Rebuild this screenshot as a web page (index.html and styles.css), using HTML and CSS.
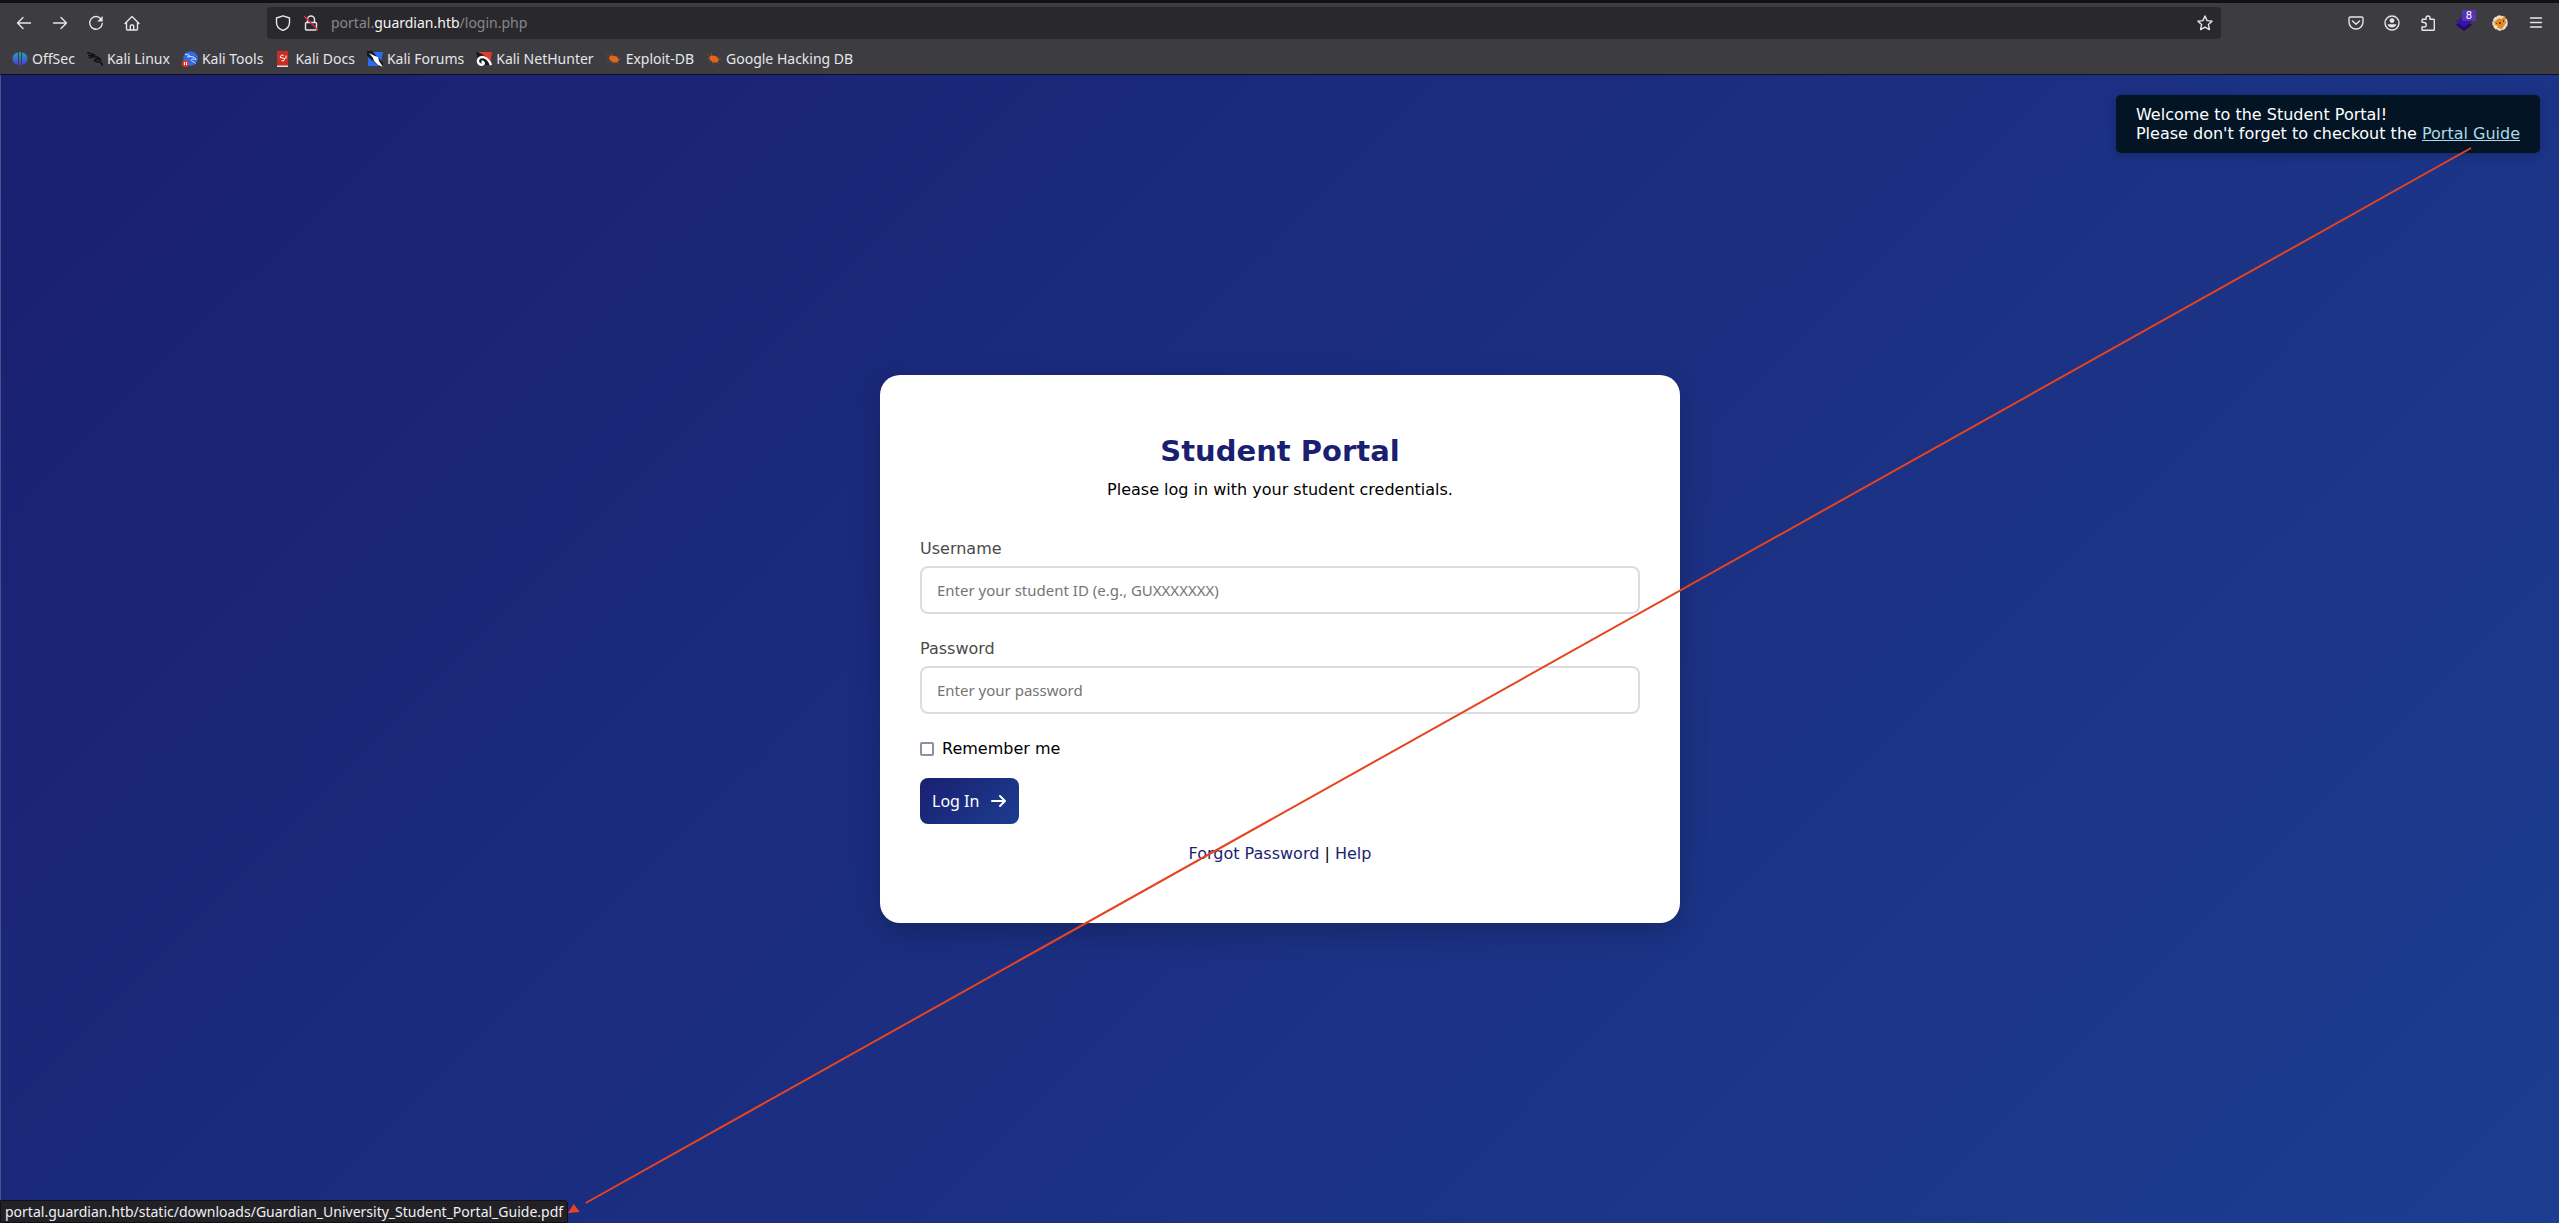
FILE: index.html
```html
<!DOCTYPE html>
<html lang="en">
<head>
<meta charset="utf-8">
<title>Student Portal</title>
<link rel="stylesheet" href="styles.css">
</head>
<body>
<header class="chrome">
  <div class="tabstrip"></div>
  <div class="toolbar">
    <nav class="nav-buttons" aria-label="Navigation">
      <button class="tool" aria-label="Back"><svg viewBox="0 0 16 16"><path d="M14.500 8H1.500M7 2.500 1.500 8 7 13.500"/></svg></button>
      <button class="tool" aria-label="Forward"><svg viewBox="0 0 16 16"><path d="M1.500 8h13M9 2.500 14.500 8 9 13.500"/></svg></button>
      <button class="tool" aria-label="Reload"><svg viewBox="0 0 16 16"><path d="M13 4A6.300 6.300 0 1 0 14.300 8.500"/><path class="solid" d="M14.700 1v5.500H9.200z"/></svg></button>
      <button class="tool" aria-label="Home"><svg viewBox="0 0 16 16"><path d="M1 8.500 8 1.500l7 7M2.500 7.500V14q0 1 1 1h9q1 0 1-1V7.500M6.300 15v-4q0-1 1-1h1.400q1 0 1 1v4"/></svg></button>
    </nav>
    <div class="urlbar">
      <svg class="icon" viewBox="0 0 16 16"><path d="M8 .8 14.500 3v4.500c0 4-3 6.700-6.500 8-3.500-1.300-6.500-4-6.500-8V3z"/></svg>
      <svg class="icon lock" viewBox="0 0 16 16"><path d="M4.500 7V4.500a3.500 3.500 0 0 1 7 0V7M3.500 7.500h9q1 0 1 1V14q0 1-1 1h-9q-1 0-1-1V8.500q0-1 1-1z"/><path class="strike" d="M1.500 1.500l13 13"/></svg>
      <span class="url">portal.<b>guardian.htb</b>/login.php</span>
      <svg class="icon" viewBox="0 0 16 16"><path d="M8 1l2.100 4.600 5 .6-3.700 3.400 1 5L8 12.100l-4.400 2.500 1-5L.900 6.200l5-.6z"/></svg>
    </div>
    <div class="extensions">
      <button class="tool" aria-label="Pocket"><svg viewBox="0 0 16 16"><path d="M2.500 2h11q1.500 0 1.500 1.500V7A7 7 0 0 1 1 7V3.500Q1 2 2.500 2zM4.500 6 8 9.300 11.500 6"/></svg></button>
      <button class="tool" aria-label="Account"><svg viewBox="0 0 16 16"><circle cx="8" cy="8" r="7"/><circle class="solid" cx="8" cy="5.600" r="2.400"/><path class="solid" d="M3.600 9.300h8.800a4.500 4 0 0 1-8.800 0z"/></svg></button>
      <button class="tool" aria-label="Extensions"><svg viewBox="0 0 16 16"><path d="M2 7V5q0-.8.800-.8H6V3a2 2 0 0 1 4 0v1.200h3.500q.8 0 .8.800v9.500q0 .8-.8.800H2.800q-.8 0-.8-.8V12h2a1.500 1.500 0 0 0 0-4.500z"/></svg></button>
      <button class="tool" aria-label="Technology profiler"><svg viewBox="0 0 16 16"><path fill="#1d0b66" stroke="none" d="M0 10 8 4l8 6-8 6z"/><path fill="#3a12a6" stroke="none" d="M0 6.500 8 1l8 5.500-8 6z"/></svg><span class="count">8</span></button>
      <button class="tool" aria-label="Proxy switcher"><svg viewBox="0 0 16 16"><circle cx="8" cy="8" r="7" fill="#f1dfca" stroke="#e8e0d8" stroke-dasharray="3 2"/><path fill="#e58a20" stroke="none" d="M2 7l5-4 2 1 4-3 1 7-4 6-5-1 1-2-3-1z"/><path fill="#6b3a12" stroke="none" d="M7 7h2v2H7zM11 5h1v2h-1zM4 8h1v1H4z"/></svg></button>
      <button class="tool" aria-label="Menu"><svg viewBox="0 0 16 16"><path d="M2.500 3h11M2.500 7.500h11M2.500 12h11"/></svg></button>
    </div>
  </div>
  <nav class="bookmarks" aria-label="Bookmarks">
    <a href="#"><svg viewBox="0 0 16 16"><defs><linearGradient id="offsec" gradientUnits="userSpaceOnUse" x1="0" y1="1" x2="0" y2="15"><stop stop-color="#22a3b4"/><stop offset="1" stop-color="#4d38d8"/></linearGradient></defs><path fill="url(#offsec)" d="M6 1.200V14Q.5 12.500.5 7.500T6 1.200zM7 1h2v10L8.500 15.500h-1L7 11zM10 1.200q5.500 1.300 5.500 6.300T10 14z"/></svg>OffSec</a>
    <a href="#"><svg viewBox="0 0 16 16"><path fill="none" stroke="#121214" stroke-width="1.600" d="M0 1.500l8 2.500M1 4.500 8 5M2 7l6-1.500c3 .5 5 2 5.500 3.500-3-1.500-6-1-6 .5s4 1 6 2 2 2 2 3.500"/></svg>Kali Linux</a>
    <a href="#"><svg viewBox="0 0 16 16"><circle cx="8.500" cy="7.500" r="7.300" fill="#2f6be8"/><path fill="none" stroke="#dbe6ff" d="M3 3l5 1.500M5 6l4-.5c3 0 4.500 2 5 3-3-1-5-.5-4.500 1s3 1 4 3"/><circle cx="3.500" cy="12.500" r="3.500" fill="#e2392d"/><path stroke="#fff" d="M2.500 11v3M4.500 11v3"/></svg>Kali Tools</a>
    <a href="#"><svg viewBox="0 0 16 16"><path fill="#2f3c60" d="M1 0h2v15H1z"/><path fill="#cb2b20" d="M2 0h11v14.500H2z"/><path fill="#e8e0dd" d="M2 14.500h11V16H2z"/><path fill="none" stroke="#fff" d="M8.500 4.500l-2-.5L5 6.500l5 1L8.500 10l-2-.5M11 4.500v3"/></svg>Kali Docs</a>
    <a href="#"><svg viewBox="0 0 16 16"><path fill="#2a6cf2" d="M1 1h15l-3 14H1z"/><path fill="#17181c" d="M0 0h5l11 12v4h-3L0 5z"/><path fill="#fff" d="M2 2l6 3 3 1 1 4 4 6-5-2-4-4-1-3z"/></svg>Kali Forums</a>
    <a href="#"><svg viewBox="0 0 16 16"><path fill="#e23a2e" d="M3 1h13l-2 12z"/><path fill="#17181c" d="M0 1l6 2 4 3 5 8H9L2 10z"/><path fill="none" stroke="#fff" stroke-width="2.400" d="M15 14C12 6 5 4 2.500 8c-2 4 2 7 5 5q1-2-2-2.500"/></svg>Kali NetHunter</a>
    <a href="#"><svg viewBox="0 0 16 16"><path fill="none" stroke="#8a4526" d="M1 3l12 10M5 2l2 12M1 8h14M3 11l9-6"/><ellipse cx="8" cy="8" rx="5" ry="3.200" transform="rotate(25 8 8)" fill="#e0651f"/></svg>Exploit-DB</a>
    <a href="#"><svg viewBox="0 0 16 16"><path fill="none" stroke="#8a4526" d="M1 3l12 10M5 2l2 12M1 8h14M3 11l9-6"/><ellipse cx="8" cy="8" rx="5" ry="3.200" transform="rotate(25 8 8)" fill="#e0651f"/></svg>Google Hacking DB</a>
  </nav>
</header>
<main class="page">
  <aside class="toast">Welcome to the Student Portal!<br>Please don't forget to checkout the <a href="#">Portal Guide</a></aside>
  <section class="card">
    <h1>Student Portal</h1>
    <p class="lead">Please log in with your student credentials.</p>
    <form>
      <label class="name" for="user">Username</label>
      <input class="field" id="user" type="text" placeholder="Enter your student ID (e.g., GUXXXXXXX)">
      <label class="name" for="pass">Password</label>
      <input class="field" id="pass" type="password" placeholder="Enter your password">
      <label class="remember"><input type="checkbox">Remember me</label>
      <button class="login" type="button">Log In<svg viewBox="0 0 16 16"><path d="M1 8h13M9 3l5 5-5 5"/></svg></button>
    </form>
    <p class="links"><a href="#">Forgot Password</a> | <a href="#">Help</a></p>
  </section>
  <output class="status">portal.guardian.htb/static/downloads/Guardian_University_Student_Portal_Guide.pdf</output>
  <svg class="arrow" viewBox="0 75 2559 1148" preserveAspectRatio="none" aria-hidden="true"><path fill="none" stroke="#e8431f" stroke-width="2" d="M2471 148 585 1203"/><path fill="#e8431f" d="M567 1213l6-9 6 8z"/></svg>
</main>
</body>
</html>
```
FILE: styles.css
```css
* { box-sizing: border-box; }
body {
  margin: 0;
  min-height: 100vh;
  display: flex;
  flex-direction: column;
  font: 16px/19px "DejaVu Sans", sans-serif;
  color: #000;
}
h1, p { margin: 0; }
button { font: inherit; border: 0; padding: 0; background: none; color: inherit; }

.chrome {
  background: #3c3c41;
  border-bottom: 1px solid #111114;
  color: #e6e6e8;
  font: 14px/20px "Noto Sans", sans-serif;
}
.tabstrip { height: 3px; background: #111114; }
.toolbar { display: flex; align-items: center; height: 40px; padding: 0 15px 0 16px; }
.chrome svg { width: 16px; height: 16px; flex: none; display: block; }
.tool { position: relative; }
.tool svg, .icon { fill: none; stroke: #e6e6e8; stroke-width: 1.4; stroke-linecap: round; stroke-linejoin: round; }
.tool .solid { fill: #e6e6e8; stroke: none; }
.nav-buttons { display: flex; gap: 20px; width: 251px; }
.urlbar {
  flex: 1;
  display: flex;
  align-items: center;
  gap: 12px;
  height: 32px;
  padding: 0 8px;
  border-radius: 4px;
  background: #29292d;
  color: #87878b;
}
.url { flex: 1; }
.url b { font-weight: 400; color: #f4f4f6; }
.lock .strike { stroke: #e22840; }
.extensions { display: flex; justify-content: flex-end; gap: 20px; width: 323px; }
.count {
  position: absolute;
  left: 6px;
  top: -5px;
  width: 14px;
  height: 11px;
  background: #5a33b0;
  font: 10px/11px "DejaVu Sans", sans-serif;
  color: #fff;
  text-align: center;
}
.bookmarks { display: flex; gap: 12px; height: 31px; padding: 0 12px; align-items: center; }
.bookmarks a { display: flex; align-items: center; gap: 4px; color: inherit; text-decoration: none; white-space: nowrap; }

.page {
  flex: 1;
  position: relative;
  display: flex;
  align-items: center;
  justify-content: center;
  border-left: 1px solid #4a5090;
  background: linear-gradient(135deg, #1a1f71, #1c3d90);
}
.toast {
  position: absolute;
  top: 20px;
  right: 19px;
  padding: 10px 20px;
  border-radius: 5px;
  background: #031525;
  color: #fff;
  box-shadow: 0 2px 10px rgba(0, 0, 0, .2);
}
.toast a { color: #add8e6; }
.card {
  width: 800px;
  padding: 60px 40px;
  border-radius: 20px;
  background: #fff;
  box-shadow: 0 10px 30px rgba(0, 0, 0, .2);
}
.card h1 { font-size: 29px; line-height: 32px; text-align: center; color: #1a1f71; }
.lead { margin: 13px 0 40px; text-align: center; }
form { display: flex; flex-direction: column; align-items: flex-start; }
.name { margin-bottom: 8px; color: #4a4a4a; }
.field {
  width: 100%;
  height: 48px;
  margin-bottom: 25px;
  padding: 0 15px;
  border: 2px solid #ddd;
  border-radius: 8px;
  font: 15px "Noto Sans", sans-serif;
}
.field::placeholder { color: #757575; }
.remember { display: flex; align-items: center; gap: 8px; margin-bottom: 20px; }
.remember input {
  appearance: none;
  width: 14px;
  height: 14px;
  margin: 0;
  border: 2px solid #8f8f9d;
  border-radius: 2px;
}
.login {
  display: flex;
  align-items: center;
  gap: 12px;
  height: 46px;
  padding: 0 12px;
  border-radius: 8px;
  background: linear-gradient(135deg, #1a1f71, #1c3d90);
  color: #fff;
  font: 16px "Noto Sans", sans-serif;
}
.login svg { width: 16px; height: 16px; fill: none; stroke: #fff; stroke-width: 2; stroke-linecap: round; stroke-linejoin: round; }
.links { margin-top: 20px; text-align: center; }
.links a { color: #1a1f71; text-decoration: none; }
.status {
  position: absolute;
  left: -1px;
  bottom: 0;
  padding: 1px 4px;
  border: 1px solid #111114;
  border-radius: 0 4px 0 0;
  background: #222226;
  color: #f0f0f2;
  font: 14px/19px "Noto Sans", sans-serif;
}
.arrow { position: absolute; inset: 0; width: 100%; height: 100%; pointer-events: none; }
```
